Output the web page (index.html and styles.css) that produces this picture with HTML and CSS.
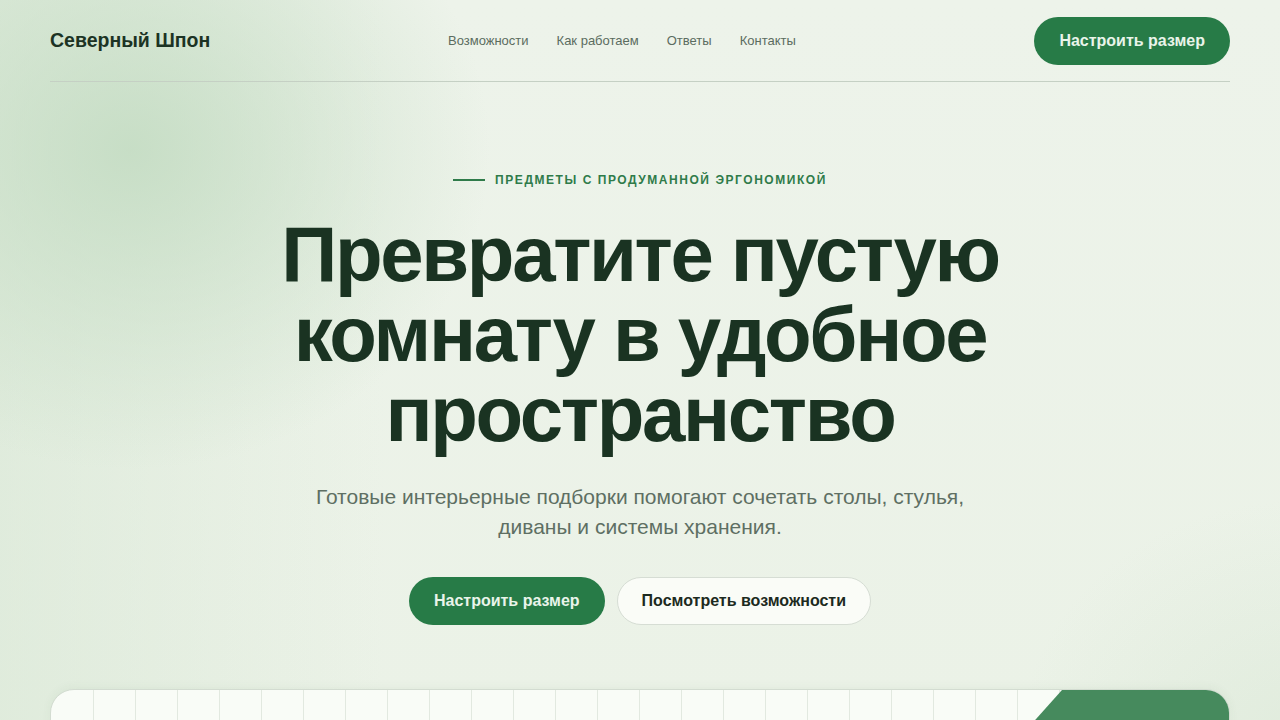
FILE: index.html
```html
<!DOCTYPE html>
<html lang="ru">
<head>
<meta charset="utf-8">
<title>Северный Шпон</title>
<link rel="stylesheet" href="styles.css">
</head>
<body>
<div class="page">
  <header class="topbar">
    <a class="brand" href="#">Северный Шпон</a>
    <nav class="nav">
      <a href="#">Возможности</a>
      <a href="#">Как работаем</a>
      <a href="#">Ответы</a>
      <a href="#">Контакты</a>
    </nav>
    <a class="btn btn-primary" href="#">Настроить размер</a>
  </header>

  <section class="hero">
    <p class="eyebrow"><span class="eyebrow-line"></span>Предметы с продуманной эргономикой</p>
    <h1 class="title">Превратите пустую комнату в удобное пространство</h1>
    <p class="lead">Готовые интерьерные подборки помогают сочетать столы, стулья, диваны и системы хранения.</p>
    <div class="actions">
      <a class="btn btn-primary" href="#">Настроить размер</a>
      <a class="btn btn-ghost" href="#">Посмотреть возможности</a>
    </div>
  </section>

  <section class="preview">
    <div class="preview-accent"></div>
  </section>
</div>
</body>
</html>
```

FILE: styles.css
```css
* { box-sizing: border-box; }

html, body {
  margin: 0;
  height: 100%;
}

body {
  font-family: "Liberation Sans", Arial, sans-serif;
  color: #1a3322;
  background:
    radial-gradient(ellipse 360px 320px at 130px 150px, rgba(194, 219, 193, 0.85), rgba(194, 219, 193, 0) 100%),
    radial-gradient(ellipse 280px 240px at 1300px 740px, rgba(205, 224, 202, 0.35), rgba(205, 224, 202, 0) 100%),
    linear-gradient(90deg, rgba(214, 230, 211, 0.55) 0%, rgba(214, 230, 211, 0) 30%),
    linear-gradient(180deg, #edf3ea 0%, #ebf2e7 100%);
  overflow: hidden;
}

a { text-decoration: none; color: inherit; }

.page {
  width: 1180px;
  margin: 0 auto;
}

/* top navigation */
.topbar {
  display: flex;
  align-items: center;
  height: 82px;
  padding-top: 1px;
  padding-bottom: 1px;
  border-bottom: 1px solid #c5d0c4;
}

.brand {
  font-size: 19.5px;
  font-weight: 700;
  letter-spacing: 0;
  color: #1c3324;
  width: 398px;
}

.nav {
  display: flex;
  gap: 28px;
  font-size: 13px;
  color: #5b6c60;
  flex: 1;
}

.btn {
  display: inline-flex;
  align-items: center;
  justify-content: center;
  height: 48px;
  border-radius: 24px;
  font-size: 16px;
  font-weight: 700;
}

.btn-primary {
  background: #277b47;
  color: #e9f4ea;
  padding: 0 25px;
}

.btn-ghost {
  background: #fafcf7;
  color: #1c2a20;
  border: 1px solid #d6ddd4;
  padding: 0 24px;
}

/* hero */
.hero {
  display: flex;
  flex-direction: column;
  align-items: center;
  text-align: center;
  padding-top: 90px;
}

.eyebrow {
  display: flex;
  align-items: center;
  gap: 10px;
  margin: 0;
  font-size: 12px;
  line-height: 16px;
  font-weight: 700;
  letter-spacing: 1.55px;
  text-transform: uppercase;
  color: #2f7b4a;
}

.eyebrow-line {
  width: 32px;
  height: 2px;
  background: #2f7b4a;
}

.title {
  margin: 26px 0 0;
  width: 800px;
  font-size: 78px;
  line-height: 80px;
  font-weight: 700;
  letter-spacing: -2.35px;
  color: #1a3322;
}

.lead {
  margin: 28px 0 0;
  width: 680px;
  font-size: 21px;
  line-height: 30px;
  color: #5e6f63;
}

.actions {
  display: flex;
  gap: 12px;
  margin-top: 35px;
}

/* product preview card */
.preview {
  position: relative;
  margin-top: 64px;
  height: 200px;
  border: 1px solid #d3dcd1;
  border-radius: 24px;
  overflow: hidden;
  background-color: #f9fcf7;
  background-image: repeating-linear-gradient(90deg, transparent 0, transparent 41px, #e2e9e0 41px, #e2e9e0 42px);
  background-position: 1px 0;
  box-shadow: 0 -2px 10px rgba(60, 90, 60, 0.05);
}

.preview-accent {
  position: absolute;
  top: 0;
  right: 0;
  width: 200px;
  height: 200px;
  background: #468a5d;
  clip-path: polygon(16.5% 0, 100% 0, 100% 100%, -73% 100%);
}
```
